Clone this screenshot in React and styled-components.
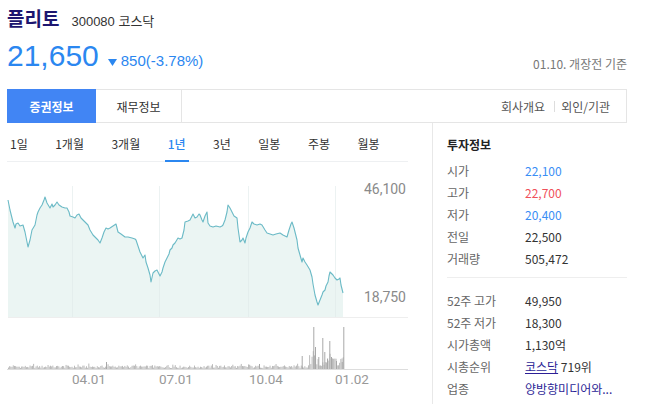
import React from "react";
import styled, { createGlobalStyle } from "styled-components";

const Global = createGlobalStyle`
  body { margin: 0; background: #fff; font-family: "Noto Sans CJK KR", "Noto Sans", sans-serif; color: #333; }
  * { box-sizing: border-box; }
`;

const Page = styled.div`
  width: 627px;
  padding-left: 7px;
`;

const TitleRow = styled.div`
  display: flex;
  align-items: baseline;
  height: 36px;
  line-height: 36px;
  gap: 12px;
`;

const Title = styled.h1`
  margin: 0;
  font-size: 19px;
  font-weight: 700;
  color: #1d1670;
`;

const Code = styled.span`
  font-family: "Liberation Sans", "Noto Sans CJK KR", sans-serif;
  font-size: 13px;
  color: #333;
`;

const PriceRow = styled.div`
  display: flex;
  justify-content: space-between;
  align-items: flex-start;
  height: 53px;
  padding-top: 2px;
`;

const PriceGroup = styled.div`
  display: flex;
  align-items: baseline;
  line-height: 36px;
  font-family: "Liberation Sans", sans-serif;
  color: #2b87f0;
`;

const Price = styled.span`
  font-size: 30px;
`;

const Change = styled.span`
  font-size: 15px;
  display: inline-flex;
  align-items: baseline;
  margin-left: 9px;
  gap: 4px;
`;

const Tri = styled.svg`
  width: 9px;
  height: 7px;
  fill: #2b87f0;
`;

const DateInfo = styled.span`
  margin-top: 17px;
  font-size: 12px;
  line-height: 17px;
  color: #777;
`;

const TabBox = styled.div`
  display: flex;
  align-items: stretch;
  height: 34px;
  border: 1px solid #e5e5e5;
`;

const MainTab = styled.div`
  display: flex;
  align-items: center;
  justify-content: center;
  width: ${(p) => (p.$active ? "89px" : "86px")};
  margin: ${(p) => (p.$active ? "-1px 0 -1px -1px" : "0")};
  background: ${(p) => (p.$active ? "#4185f4" : "transparent")};
  color: ${(p) => (p.$active ? "#fff" : "#333")};
  font-weight: ${(p) => (p.$active ? 700 : 400)};
  font-size: 12px;
  border-right: ${(p) => (p.$active ? "none" : "1px solid #e5e5e5")};
`;

const Links = styled.div`
  margin-left: auto;
  display: flex;
  align-items: center;
  padding-right: 16px;
  font-size: 12px;
  color: #555;
`;

const Sep = styled.span`
  width: 1px;
  height: 11px;
  background: #ddd;
  margin: 0 6px 0 9px;
`;

const Content = styled.div`
  display: flex;
`;

const LeftCol = styled.div`
  width: 426px;
  border-right: 1px solid #e8e8e8;
  height: 281px;
`;

const PeriodTabs = styled.div`
  display: flex;
  gap: 21.5px;
  width: 401px;
  height: 39px;
  border-bottom: 1px solid #eef0f2;
`;

const PeriodTab = styled.div`
  padding: 0 3px;
  display: flex;
  align-items: center;
  padding-top: 3px;
  font-size: 12px;
  color: ${(p) => (p.$active ? "#2b87f0" : "#333")};
  font-weight: ${(p) => (p.$active ? 500 : 400)};
  border-bottom: 2px solid ${(p) => (p.$active ? "#2b87f0" : "transparent")};
  margin-bottom: -1px;
`;

const ChartSvg = styled.svg`
  display: block;
  width: 401px;
  height: 242px;
`;

const RightCol = styled.div`
  width: 194px;
  padding: 11px 0 0 14px;
`;

const InfoTitle = styled.div`
  font-size: 12px;
  font-weight: 700;
  line-height: 22px;
  color: #222;
  margin-bottom: 3px;
`;

const InfoList = styled.div`
  padding-top: ${(p) => (p.$second ? "11px" : "0")};
  padding-bottom: ${(p) => (p.$second ? "0" : "8px")};
  border-bottom: ${(p) => (p.$second ? "none" : "1px solid #eee")};
`;

const Row = styled.div`
  display: flex;
  height: 22px;
  align-items: center;
  font-size: 12px;
`;

const Label = styled.span`
  width: 78px;
  color: #666;
  flex-shrink: 0;
`;

const Value = styled.span`
  color: ${(p) => p.$color || "#333"};
  white-space: nowrap;
`;

const Link = styled.span`
  color: #2c1f96;
  text-decoration: ${(p) => (p.$under ? "underline" : "none")};
`;

const pts = [
  [8,200],[10,210],[13,222],[15,228],[16,224],[18,223],[20,226],[23,225],[25,232],[28,247],[30,240],[32,230],[35,225],[37,215],[38,212],[40,208],[42,205],[44,200],[45,197],[47,203],[50,208],[52,204],[53,207],[55,205],[57,202],[59,205],[62,207],[65,208],[67,208],[69,212],[70,216],[73,217],[75,218],[77,215],[79,214],[81,218],[83,220],[85,222],[88,225],[90,230],[93,235],[96,238],[98,240],[100,243],[102,238],[104,232],[106,228],[108,229],[110,228],[113,226],[116,224],[118,232],[121,234],[125,237],[128,237],[132,238],[135,239],[136,240],[138,246],[140,252],[142,256],[143,258],[145,255],[146,262],[148,268],[150,275],[151,282],[153,273],[155,271],[157,270],[159,274],[160,276],[162,272],[163,268],[165,262],[167,258],[169,254],[170,250],[172,248],[173,245],[175,243],[178,238],[180,239],[182,238],[184,230],[185,222],[188,221],[190,220],[192,216],[193,214],[195,218],[197,217],[199,214],[200,215],[202,220],[203,222],[205,216],[207,212],[208,223],[210,226],[213,227],[216,226],[220,227],[222,226],[223,225],[225,220],[227,212],[228,205],[230,208],[232,212],[234,216],[237,218],[238,228],[240,242],[242,240],[243,238],[245,243],[246,238],[248,232],[250,228],[252,222],[254,224],[257,225],[260,224],[262,225],[265,230],[267,233],[270,234],[273,235],[276,234],[280,233],[283,235],[287,237],[289,230],[291,224],[292,222],[294,228],[295,232],[297,240],[298,248],[300,255],[302,262],[303,258],[305,262],[307,265],[310,270],[312,277],[313,284],[315,295],[317,302],[318,305],[320,300],[322,295],[323,292],[325,290],[326,286],[328,282],[329,276],[330,272],[332,274],[333,275],[335,278],[337,280],[339,279],[340,278],[341,285],[343,293],
];

const linePath = pts.map((p, i) => `${i ? "L" : "M"}${p[0]},${p[1]}`).join(" ");
const areaPath = `${linePath} L343,317 L8,317 Z`;

function rnd(i) {
  const x = Math.sin(i * 12.9898 + 78.233) * 43758.5453;
  return x - Math.floor(x);
}

const volBars = [];
for (let i = 0; i < 280; i++) {
  const x = 8 + i * 1.2;
  if (x > 344) break;
  let h = 1 + rnd(i) * 2.5;
  if (rnd(i + 500) > 0.9) h += 2;
  if (x > 308) h += rnd(i + 900) * 14;
  volBars.push([x, h]);
}
const spikes = [
  [106, 7], [259, 5], [301.7, 13], [313.3, 42], [315, 22], [318.3, 12], [322.3, 31],
  [324.3, 17], [329.3, 28], [331, 12], [341.7, 7], [343.3, 42], [327, 10], [336, 8],
];

function Chart() {
  return (
    <ChartSvg viewBox="7 162 401 242">
      <path d={areaPath} fill="#ebf5f3" />
      {[72, 159, 248, 335].map((x) => (
        <line key={x} x1={x + 0.5} x2={x + 0.5} y1={186} y2={317} stroke="#dfe9e9" strokeOpacity="0.6" strokeWidth="1" />
      ))}
      <path d={linePath} fill="none" stroke="#6bbac6" strokeWidth="1.1" strokeLinejoin="round" />
      <line x1="8" x2="408" y1="317.5" y2="317.5" stroke="#eeeeee" />
      {volBars.map(([x, h], i) => (
        <rect key={i} x={x} y={369 - h} width="0.9" height={h} fill="#b4b4b4" />
      ))}
      {spikes.map(([x, h], i) => (
        <rect key={"s" + i} x={x} y={369 - h} width="1" height={h} fill="#a8a8a8" />
      ))}
      <line x1="7" x2="408" y1="369.5" y2="369.5" stroke="#dddddd" />
      <g fontFamily="Roboto, sans-serif" fontSize="14" fill="#8a8a8a" textAnchor="end">
        <text x="406" y="194">46,100</text>
        <text x="406" y="302">18,750</text>
      </g>
      <g fontFamily="Roboto, sans-serif" fontSize="13.5" fill="#999" textAnchor="middle">
        <text x="89" y="384">04.01</text>
        <text x="176" y="384">07.01</text>
        <text x="266" y="384">10.04</text>
        <text x="352" y="384">01.02</text>
      </g>
    </ChartSvg>
  );
}

const periods = ["1일", "1개월", "3개월", "1년", "3년", "일봉", "주봉", "월봉"];

export default function App() {
  return (
    <>
      <Global />
      <Page>
        <TitleRow>
          <Title>플리토</Title>
          <Code>300080 코스닥</Code>
        </TitleRow>
        <PriceRow>
          <PriceGroup>
            <Price>21,650</Price>
            <Change>
              <Tri viewBox="0 0 9 7"><polygon points="0,0 9,0 4.5,7" /></Tri>
              850(-3.78%)
            </Change>
          </PriceGroup>
          <DateInfo>01.10. 개장전 기준</DateInfo>
        </PriceRow>
        <TabBox>
          <MainTab $active>증권정보</MainTab>
          <MainTab>재무정보</MainTab>
          <Links>
            <span>회사개요</span>
            <Sep />
            <span>외인/기관</span>
          </Links>
        </TabBox>
        <Content>
          <LeftCol>
            <PeriodTabs>
              {periods.map((p) => (
                <PeriodTab key={p} $active={p === "1년"}>{p}</PeriodTab>
              ))}
            </PeriodTabs>
            <Chart />
          </LeftCol>
          <RightCol>
            <InfoTitle>투자정보</InfoTitle>
            <InfoList>
              <Row><Label>시가</Label><Value $color="#3a8ef5">22,100</Value></Row>
              <Row><Label>고가</Label><Value $color="#f0505a">22,700</Value></Row>
              <Row><Label>저가</Label><Value $color="#3a8ef5">20,400</Value></Row>
              <Row><Label>전일</Label><Value>22,500</Value></Row>
              <Row><Label>거래량</Label><Value>505,472</Value></Row>
            </InfoList>
            <InfoList $second>
              <Row><Label>52주 고가</Label><Value>49,950</Value></Row>
              <Row><Label>52주 저가</Label><Value>18,300</Value></Row>
              <Row><Label>시가총액</Label><Value>1,130억</Value></Row>
              <Row><Label>시총순위</Label><Value><Link $under>코스닥</Link> 719위</Value></Row>
              <Row><Label>업종</Label><Value><Link>양방향미디어와...</Link></Value></Row>
            </InfoList>
          </RightCol>
        </Content>
      </Page>
    </>
  );
}
